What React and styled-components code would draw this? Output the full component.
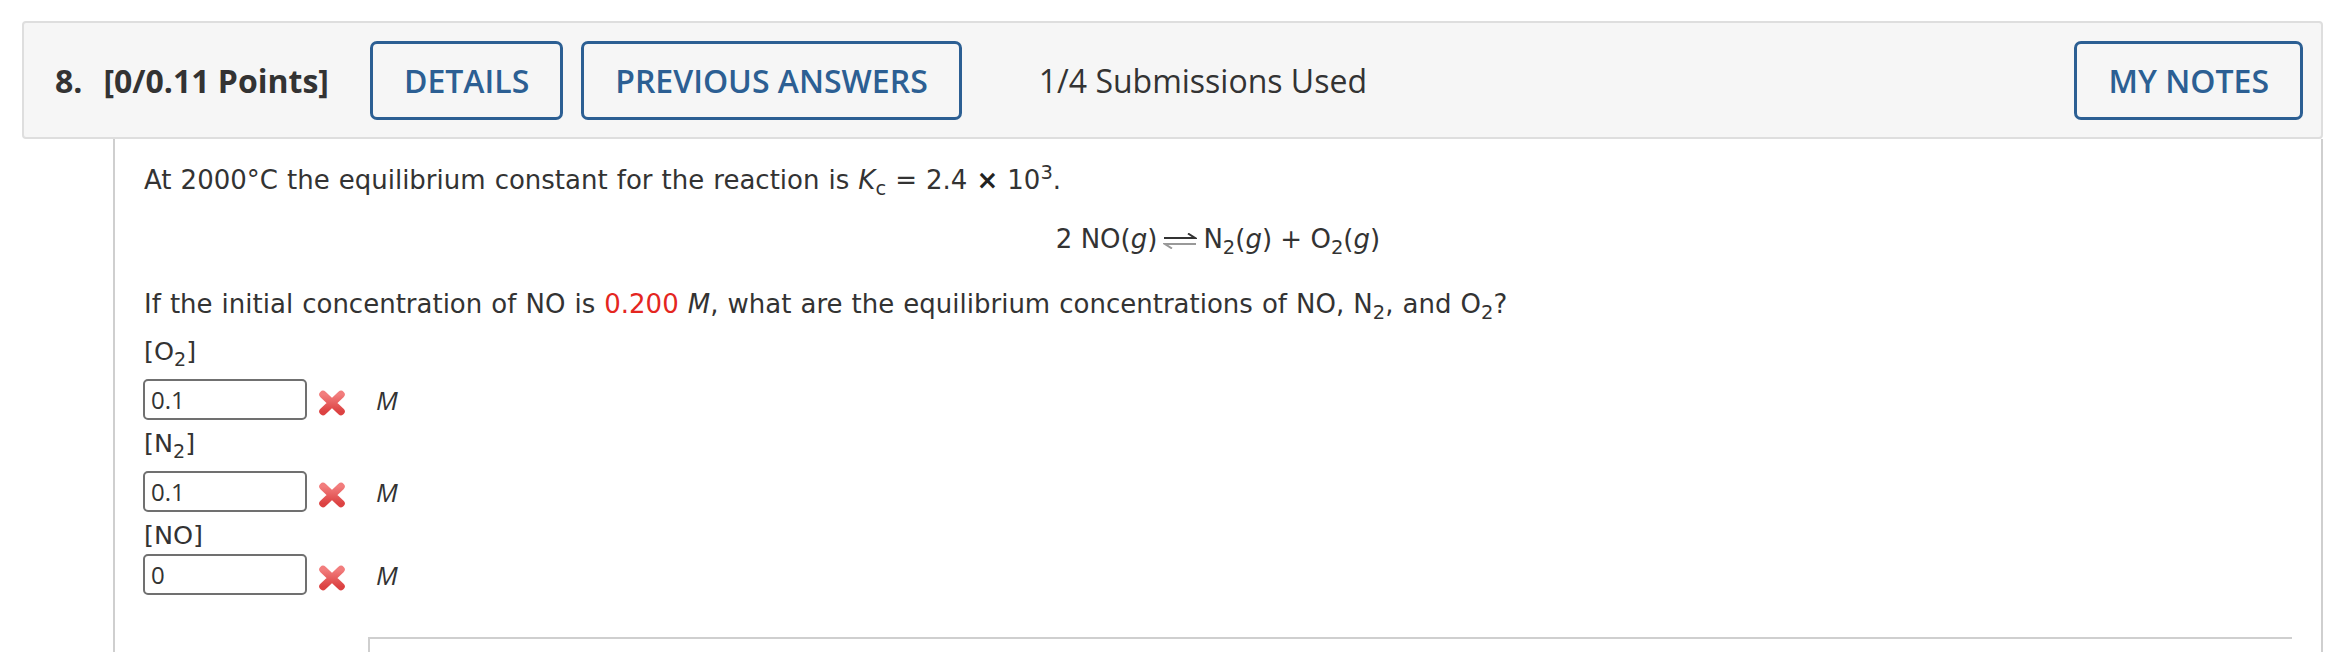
import React from 'react';
import styled, { createGlobalStyle } from 'styled-components';

const GlobalStyle = createGlobalStyle`
  html, body {
    margin: 0;
    padding: 0;
    background: #fff;
  }
`;

const Page = styled.div`
  padding: 21px 5px 0 22px;
  height: 652px;
  box-sizing: border-box;
  overflow: hidden;
`;

const Header = styled.div`
  display: flex;
  align-items: center;
  height: 118px;
  box-sizing: border-box;
  padding: 0 18px 0 31px;
  background: #f6f6f6;
  border: 2px solid #dedede;
  border-radius: 4px;
  font-family: 'Open Sans', 'Liberation Sans', sans-serif;
  font-size: 32px;
  color: #333;
`;

const QNum = styled.span`
  font-weight: 700;
  margin-right: 21px;
`;

const Points = styled.span`
  font-weight: 700;
  margin-right: 41px;
`;

const HeaderButton = styled.button`
  height: 79px;
  box-sizing: border-box;
  padding: 0 31px;
  margin-right: ${p => (p.$last ? '0' : '18px')};
  margin-left: ${p => (p.$last ? 'auto' : '0')};
  background: transparent;
  border: 3px solid #2c5f93;
  border-radius: 7px;
  font-family: inherit;
  font-size: 32px;
  font-weight: 600;
  color: #2c5f93;
  white-space: nowrap;
`;

const Submissions = styled.span`
  margin-left: 59px;
  font-weight: 400;
`;

const Content = styled.div`
  margin-left: 91px;
  height: 600px;
  padding: 23px 29px 0 29px;
  border-left: 2px solid #cfcfcf;
  border-right: 2px solid #cfcfcf;
  font-family: 'DejaVu Sans', Verdana, sans-serif;
  font-size: 26px;
  color: #333;

  sub,
  sup {
    line-height: 0;
    font-size: 0.75em;
  }
`;

const Para = styled.p`
  margin: ${p => p.$gap || 0}px 0 0 0;
  line-height: 36px;
  word-spacing: 0.8px;
  white-space: nowrap;
`;

const Equation = styled(Para)`
  text-align: center;
  word-spacing: 0;
`;

const Red = styled.span`
  color: #e4261f;
`;

const Times = styled.span`
  font-weight: 700;
  color: #222;
`;

const ArrowMark = styled.svg`
  vertical-align: -1px;
  margin: 0 6px 0 6px;
`;

const EqArrow = () => (
  <ArrowMark width="34" height="16" viewBox="0 0 34 16">
    <path d="M1 5 H32 L25 0.5" stroke="#333" strokeWidth="2" fill="none" />
    <path d="M33 11 H2 L9 15.5" stroke="#999" strokeWidth="2" fill="none" />
  </ArrowMark>
);

const AnswerList = styled.div`
  margin-top: 10px;
`;

const Answer = styled.div`
  margin-top: 4px;
`;

const AnswerLabel = styled.div`
  font-size: 25.5px;
  line-height: 38px;

  sub {
    line-height: 38px;
    font-size: 0.75em;
  }
`;

const AnswerRow = styled.div`
  display: flex;
  align-items: center;
  height: 41px;
`;

const AnswerInput = styled.input`
  width: 164px;
  height: 41px;
  box-sizing: border-box;
  margin: 0 0 0 -1px;
  padding: 0 6px;
  border: 2px solid #707070;
  border-radius: 5px;
  background: #fff;
  font-family: 'Open Sans', 'Liberation Sans', sans-serif;
  font-size: 24px;
  color: #333;
  outline: none;
`;

const MarkIcon = styled.svg`
  margin: 6px 0 0 11px;
  flex: none;
`;

const WrongMark = () => (
  <MarkIcon width="28" height="26" viewBox="0 0 28 26">
    <defs>
      <linearGradient id="xgrad" x1="0" y1="0" x2="0" y2="1">
        <stop offset="0" stopColor="#f27d7d" />
        <stop offset="1" stopColor="#dc4242" />
      </linearGradient>
    </defs>
    <path
      d="M5 4.5 L23 21.5 M23 4.5 L5 21.5"
      stroke="url(#xgrad)"
      strokeWidth="7.5"
      strokeLinecap="round"
      fill="none"
    />
  </MarkIcon>
);

const Unit = styled.span`
  margin-left: 30px;
  font-family: 'Open Sans', 'Liberation Sans', sans-serif;
  font-style: italic;
  font-size: 26px;
  color: #333;
`;

const NextBox = styled.div`
  margin: 42px 0 0 224px;
  height: 40px;
  border-top: 2px solid #cfcfcf;
  border-left: 2px solid #cfcfcf;
`;

const answers = [
  { key: 'o2', label: <>[O<sub>2</sub>]</>, value: '0.1' },
  { key: 'n2', label: <>[N<sub>2</sub>]</>, value: '0.1' },
  { key: 'no', label: <>[NO]</>, value: '0' },
];

export default function App() {
  return (
    <>
      <GlobalStyle />
      <Page>
        <Header>
          <QNum>8.</QNum>
          <Points>[0/0.11 Points]</Points>
          <HeaderButton>DETAILS</HeaderButton>
          <HeaderButton>PREVIOUS ANSWERS</HeaderButton>
          <Submissions>1/4 Submissions Used</Submissions>
          <HeaderButton $last>MY NOTES</HeaderButton>
        </Header>
        <Content>
          <Para>
            At 2000°C the equilibrium constant for the reaction is{' '}
            <i>K</i>
            <sub>c</sub> = 2.4 <Times>×</Times> 10<sup>3</sup>.
          </Para>
          <Equation $gap={23}>
            2 NO(<i>g</i>)
            <EqArrow />
            N<sub>2</sub>(<i>g</i>) + O<sub>2</sub>(<i>g</i>)
          </Equation>
          <Para $gap={29}>
            If the initial concentration of NO is <Red>0.200</Red> <i>M</i>,
            what are the equilibrium concentrations of NO, N<sub>2</sub>, and O
            <sub>2</sub>?
          </Para>
          <AnswerList>
            {answers.map(a => (
              <Answer key={a.key}>
                <AnswerLabel>{a.label}</AnswerLabel>
                <AnswerRow>
                  <AnswerInput defaultValue={a.value} readOnly />
                  <WrongMark />
                  <Unit>M</Unit>
                </AnswerRow>
              </Answer>
            ))}
          </AnswerList>
          <NextBox />
        </Content>
      </Page>
    </>
  );
}
